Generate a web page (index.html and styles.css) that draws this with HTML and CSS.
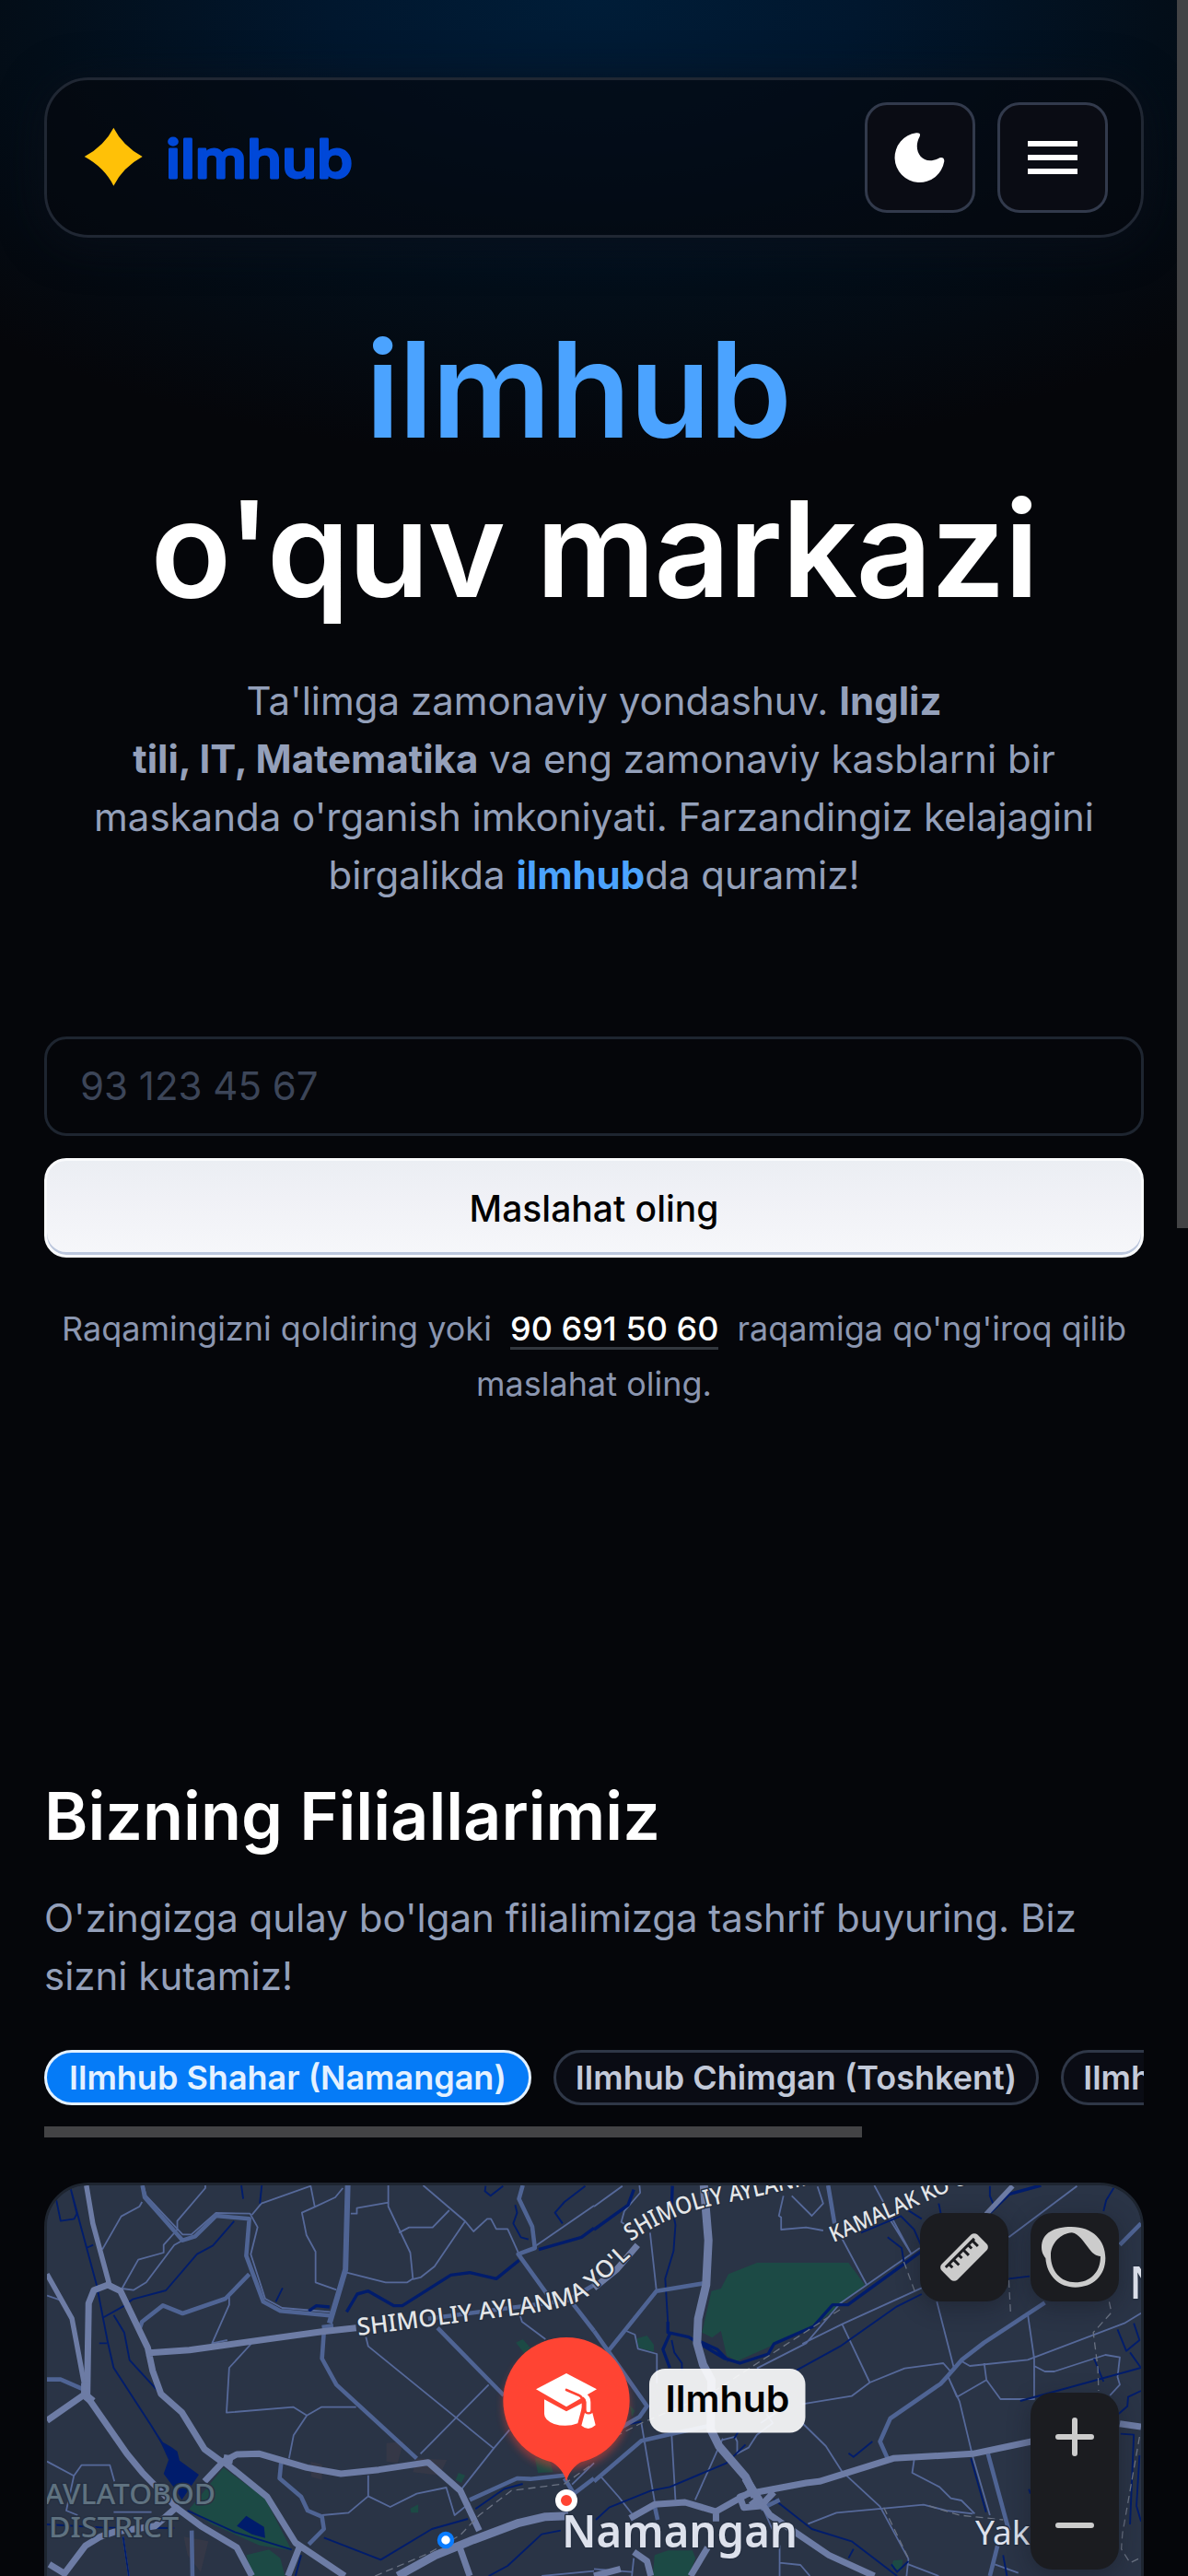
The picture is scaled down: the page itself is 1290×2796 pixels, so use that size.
FILE: index.html
```html
<!DOCTYPE html>
<html lang="uz">
<head>
<meta charset="utf-8">
<title>ilmhub</title>
<link rel="stylesheet" href="styles.css">
</head>
<body>
<div class="page">
  <header class="nav">
    <a class="logo">
      <svg width="310" height="80" viewBox="84 132 310 80">
        <path fill="#ffc107" transform="translate(70 110) scale(.33333)" d="M160 89Q190 148 254 183Q190 218 160 278Q130 218 65 183Q130 148 160 89Z"/>
        <text class="logo-text" x="180" y="193.500" textLength="203" lengthAdjust="spacingAndGlyphs">ilmhub</text>
      </svg>
    </a>
    <div class="nav-actions">
      <button class="icon-btn" aria-label="Mavzu">
        <svg width="114" height="114" viewBox="3 3 114 114"><path fill="#fff" d="M56 33.300Q61.500 32.800 59.500 37.500C51.500 52 62 69 79.500 61.200C83.500 58.800 87 60.500 86.200 64.500A27 27 0 1 1 56 33.300Z"/></svg>
      </button>
      <button class="icon-btn" aria-label="Menyu">
        <svg width="114" height="114" viewBox="3 3 114 114"><path fill="#fff" d="M33 42h54v6H33zM33 57h54v6H33zM33 72h54v6H33z"/></svg>
      </button>
    </div>
  </header>

  <main>
    <section class="hero">
      <h1><span class="brand">ilmhub</span><br>o'quv markazi</h1>
      <p class="lead">Ta'limga zamonaviy yondashuv. <b>Ingliz<br>tili, IT, Matematika</b> va eng zamonaviy kasblarni bir<br>maskanda o'rganish imkoniyati. Farzandingiz kelajagini<br>birgalikda <b class="accent">ilmhub</b>da quramiz!</p>
      <form class="lead-form">
        <input class="phone" type="text" placeholder="93 123 45 67">
        <button class="submit" type="button">Maslahat oling</button>
      </form>
      <p class="note">Raqamingizni qoldiring yoki <a class="tel">90 691 50 60</a> raqamiga qo'ng'iroq qilib<br>maslahat oling.</p>
    </section>

    <section class="branches">
      <h2>Bizning Filiallarimiz</h2>
      <p class="sub">O'zingizga qulay bo'lgan filialimizga tashrif buyuring. Biz<br>sizni kutamiz!</p>
      <div class="chips">
        <span class="chip active">Ilmhub Shahar (Namangan)</span>
        <span class="chip">Ilmhub Chimgan (Toshkent)</span>
        <span class="chip">Ilmhub Chust</span>
      </div>
      <div class="chips-track"></div>

      <div class="map">
        <svg class="map-canvas" width="1188" height="424" viewBox="51 32 1188 424">
          <defs>
            <path id="st1" d="M389 195L560 173Q622 166 642 149L690 104"/>
            <path id="st2" d="M685 93Q735 58 800 49L910 24"/>
            <path id="st3" d="M905 94L1100 8"/>
            <filter id="glow" x="-40%" y="-40%" width="180%" height="180%"><feGaussianBlur stdDeviation="12"/></filter>
          </defs>
          <rect x="51" y="32" width="1188" height="424" fill="#2a3446"/>
          <!-- west half -->
          <g transform="scale(.41135 .33333)">
            <g class="park">
              <path d="M590 1015L700 1115L770 1285L685 1268L560 1200L500 1150Z"/>
              <path d="M650 1300L710 1282L740 1310L752 1368H665Z"/>
              <path d="M1362 608L1380 597L1400 625L1385 645Z"/>
              <path d="M1412 985L1450 985L1460 1030L1420 1032Z"/>
              <path d="M1210 1032L1228 1040L1218 1065L1203 1055ZM1083 1148L1104 1135V1162H1085Z"/>
            </g>
            <g fill="#353847"><path d="M1020 935L1065 930L1050 1000L1020 995ZM485 1240L550 1255L530 1355L495 1300ZM1100 985L1180 990L1160 1040L1090 1030ZM820 995L850 1005V1055L822 1045Z"/></g>
            <g class="minor">
              <path d="M542 96V105L468 212V240L432 290V315L365 338L322 432L352 437L386 412L460 290L482 275M375 150L368 165L320 197L270 305"/>
              <path d="M665 192L690 155L820 98L831 166L797 185L809 258L833 312V412L888 436M831 166L885 135L905 105"/>
              <path d="M378 96L386 130L482 256H505L570 186L660 188L680 232L662 320L700 465L745 495L872 508"/>
              <path d="M926 188H942V170L1025 152V96M1025 152V165L1083 315L1090 400L1075 412H1018L915 380M1090 402L1110 396L1147 360L1228 213L1117 96M1053 250L1080 233H1142L1186 177M1228 213L1250 246L1286 205H1296L1310 238H1340L1370 320M1412 295L1568 162"/>
              <path d="M605 455V485L560 610L600 600M663 612L605 690L598 836L775 818L810 845L848 818H940M810 845L775 910L763 985"/>
              <path d="M966 590L972 620L1303 952M1110 970L1290 745M1215 1090L1305 950L1345 892M1373 520L1378 540L1440 597"/>
              <path d="M124 455L160 470M124 995L195 1042L215 1007H290L302 1060M195 1042L175 1155L205 1170M300 1160H400M325 1240L340 1368"/>
              <path d="M972 1040V1108L1030 1143L1100 1100L1178 1080L1200 1170L1240 1130M972 1108L920 1162L850 1170M1568 1000L1510 1070M1430 1368L1568 1352"/>
            </g>
            <g class="water">
              <path d="M148 140L160 212L196 205L203 188L186 104M186 104L255 420L285 610L300 690L400 880L440 960M270 528L325 490L350 467L438 438L520 320L562 292L618 213M300 518L328 575L342 665L420 770M228 300L246 290M262 610H282M637 96L642 140M691 96L686 155M746 430L728 475"/>
              <path class="wide" d="M815 505L835 488L870 492M915 508L943 450L972 440L1040 488H1062L1190 388L1240 380L1310 400L1370 340M1422 305L1535 265L1568 235"/>
              <path d="M1282 98L1280 115L1295 130L1328 98M1360 160L1365 185L1355 220L1375 265L1395 272M1485 220L1465 185L1490 150L1545 98M495 1155L620 1225L770 1282M855 1243L1005 1315L1140 1215L1235 1182M1255 1150L1330 1085L1380 1068M1290 1368L1340 1335L1430 1232L1480 1220M325 1240L340 1368M124 1200L270 1210L460 1212M795 1300L780 1368"/>
              <path class="lake" d="M400 880L430 932L452 948L468 962L474 992L525 1038L505 1075L480 1120L465 1090L432 1035L445 990L425 935Z"/>
              <path class="lake" d="M625 1205L650 1172L697 1208L700 1244L665 1232Z"/>
            </g>
            <g class="mid">
              <path d="M376 96L382 135L482 275L515 262L570 195L658 205L650 325L695 475L740 505L870 520M855 575L850 660L888 745L1100 985M368 565L375 540L430 487L482 513L595 465L658 385M1380 96L1370 140L1405 230L1412 300L1368 320L1450 460M1505 470L1568 570M1155 560L1330 780M124 728H160L220 760M742 1000L738 1050L795 1110L812 1155L850 1175L855 1215L815 1265M1240 1120L1365 1050L1400 1052L1490 1040M506 1220L508 1368M1490 1050L1515 1100L1568 1050M1130 530L1500 470L1568 420"/>
              <path class="thick" d="M918 96L912 370L870 545M850 560L880 555"/>
            </g>
            <g class="major">
              <path class="slim" d="M228 96L245 220L290 425M124 385L190 530L225 760"/>
              <path d="M230 785L234 480L248 437L285 420L318 440L390 625L403 700L425 775L480 835L540 955L590 1000M124 862L225 775L335 970L375 1030L470 1150L530 1205L625 1275L665 1368M385 642L500 632L850 572L940 560M540 1060L590 995L625 972L685 970L810 1015L900 1035L1000 1022L1130 998L1215 1090L1265 1220M590 995L705 1110L780 1260L910 1368M790 1275L760 1368M1215 1280L1240 1368M130 1330L170 1360L225 1270L265 1240L300 1225L410 1205L460 1150"/>
              <path class="wide" d="M1050 1368L1150 1300L1250 1250L1370 1195L1440 1175L1500 1172"/>
              <path class="wide" d="M225 740V780L245 800M590 985L615 990"/>
            </g>
            <path class="rail" d="M990 1368L1130 1295L1215 1235L1265 1170L1350 1090L1490 1068L1568 1000"/>
          </g>
          <!-- east half -->
          <g transform="translate(645 0) scale(.41135 .33333)">
            <g class="park">
              <path d="M430 348H672L715 420L590 545L480 612L378 668L350 650L335 570L312 592L285 575L310 440L335 432L355 385Z"/>
              <path d="M113 595L140 585L158 615V638L118 625ZM95 812L108 830L100 850Z"/>
              <path d="M160 1300L195 1285H260L268 1310L250 1368H155ZM790 1318L815 1315L812 1350L785 1342Z"/>
            </g>
            <g class="minor">
              <path d="M0 165L75 98M120 96L122 120L80 180L72 215L95 235M148 250L165 440M500 130L488 195L494 200V240L560 233L605 243M522 130L575 195L605 155L590 100M655 270L720 420M740 96L838 320M1275 98L1095 265M905 475L950 690M780 205L838 320M85 570L108 582L116 628L166 645V740"/>
              <path d="M550 612L655 548L865 430M430 692L560 610L650 480L860 300M655 548L728 738L820 692L922 675L940 700M728 738L680 782L550 808"/>
              <path d="M970 668L992 684L1145 664L1400 545L1444 512M1145 515L1162 660V792H1073L1036 730L1030 675M1036 730L958 785L935 720L965 800L1000 980L1045 1170M1162 684L1190 702H1215L1350 648L1388 656L1382 720L1388 745L1362 780"/>
              <path d="M550 870L612 945L655 1028L755 1142L830 1312L825 1368M565 1198L640 1162L870 1136L930 1155L1000 1165M845 990L840 1032L912 1078L942 1115L970 1122L1005 1165M830 1330L910 1368M1058 1330L1120 1358M338 925L372 915L378 930V970L408 950L430 908L472 870L455 840"/>
              <path d="M125 870L160 1125M205 910L215 1120M15 1040L65 1110L100 1165M267 1120L340 920M440 1130L490 1270V1368M490 1325L545 1332L570 1368M0 1345L100 1355M105 1310L100 1368M500 820L440 870"/>
            </g>
            <g class="water">
              <path class="wide" d="M0 240L90 160L105 110M207 98L205 160M195 540V575L250 590L345 660L385 675L460 645L475 612L580 555L630 485H670L865 310M200 580L182 630L200 690M1045 185L1095 125L1180 96M280 605L325 630L355 668"/>
              <path d="M205 160L215 225L210 310L188 400L195 540M205 600L212 640L232 675V700M535 698L650 620L800 490L865 450M865 205L820 170M910 155L915 185L900 230M705 250L810 196L845 240L870 310M775 265L812 300L818 345M1045 98V130L1055 160M1375 98L1352 145L1345 180M1095 400L1150 392M1425 545L1440 600L1405 635L1382 565M1415 640L1444 690L1125 798M1320 660L1345 735M1444 765L1410 785L1408 815L1385 840M672 968L685 980L735 930M0 905L50 885L125 865M5 1185L40 1145L150 1090L200 1078L350 1000L400 940M475 1118L575 1215L680 1255L800 1368M995 985L1035 1160M1148 1085L1152 1100M1080 1300L1090 1368M1390 905L1425 908L1415 1200M1440 975L1432 1140L1444 1190M685 1280L672 1310M785 1330L800 1355L830 1320M370 920L380 900"/>
            </g>
            <g class="mid">
              <path d="M38 635L165 440L290 415M0 570L140 815L120 850L0 935M0 1060L125 928L205 905L300 880M618 96L635 220M1388 290L1444 220M1190 478L1030 608L970 665L935 715L915 742L782 855L755 930L775 985M1040 970L1095 1220M1065 1270L1045 1368M160 1140L168 1185M490 1120L440 1150"/>
            </g>
            <g class="major">
              <path class="wide" d="M290 96L302 275L296 420L275 530L272 610L288 680L310 730L308 890L330 945L400 1045L425 1110"/>
              <path d="M430 1095L560 1065L595 1060L790 985L1000 970L1155 930M95 1180L160 1135L240 1128L322 1158L420 1090M322 1150V1190M405 1060L420 1095L385 1110L395 1145L440 1140L475 1095M430 1110L465 1170L620 1300L740 1368M70 1345L0 1368M300 1275L255 1368M105 1290L140 1320L150 1368M1388 872L1444 882M0 430L60 370L115 290"/>
              <path class="wide" d="M400 1050L435 1120L415 1140"/>
              <path class="slim" d="M1035 190L1105 98"/>
            </g>
            <path class="rail" d="M0 950L125 870L300 780L650 500M818 345L848 445M1095 405L1100 520M1360 475L1366 510L1318 575L1330 690L1332 765M1440 915L1395 1230L1392 1280L1415 1325L1440 1310M765 1145L830 1310M885 1140L965 1170L1080 1185"/>
          </g>
          <g class="streets">
            <text font-size="26"><textPath href="#st1" textLength="318" lengthAdjust="spacingAndGlyphs">SHIMOLIY AYLANMA YO'L</textPath></text>
            <text font-size="26"><textPath href="#st2" textLength="225" lengthAdjust="spacingAndGlyphs">SHIMOLIY AYLANMA</textPath></text>
            <text font-size="24"><textPath href="#st3" textLength="190" lengthAdjust="spacingAndGlyphs">KAMALAK KO'CHA</textPath></text>
          </g>
          <g class="district">
            <text x="234" y="378" text-anchor="end" textLength="208" lengthAdjust="spacingAndGlyphs">DAVLATOBOD</text>
            <text x="53" y="414" textLength="141" lengthAdjust="spacingAndGlyphs">DISTRICT</text>
          </g>
          <g class="places">
            <text x="610" y="425" font-size="49" font-weight="600" textLength="256" lengthAdjust="spacingAndGlyphs">Namangan</text>
            <text x="1059" y="422" font-size="37">Yaka</text>
            <text x="1226" y="155" font-size="49" font-weight="500">N</text>
          </g>
          <circle cx="484" cy="417" r="7" fill="#fff" stroke="#0a7cff" stroke-width="4.500"/>
          <g transform="translate(520 180) scale(.33333)">
            <circle cx="285" cy="275" r="205" fill="#ff4433" opacity=".45" filter="url(#glow)"/>
            <circle cx="285" cy="257" r="206" fill="#ff4433"/>
            <path fill="#ff4433" d="M205 440Q272 466 285 520Q298 466 365 440Z"/>
            <path fill="#fff" d="M213 253L285 292L340 263L322 331Q285 345 245 333Q213 320 213 300Z"/>
            <path fill="#fff" d="M186 220L285 168L384 220L285 277Z"/>
            <path class="strap" d="M285 222L325 239Q339 246 339 262V296"/>
            <path class="strap" d="M366 236Q372 262 369 290"/>
            <path class="cord" d="M346 241Q357 248 357 262V288"/>
            <path fill="#fff" d="M345 297Q357 306 370 297L380 337Q357 358 334 338Z"/>
            <circle cx="285" cy="582" r="27" fill="#ff4433" stroke="#fff" stroke-width="18"/>
          </g>
          <rect x="705" y="231" width="169.500" height="69.500" rx="17" fill="#fff" opacity=".9"/>
          <text class="pin-label" x="722.500" y="278" textLength="135" lengthAdjust="spacingAndGlyphs">Ilmhub</text>
        </svg>
        <div class="map-tools">
          <div class="tool-row">
            <div class="tool"><svg width="96" height="96" viewBox="0 0 96 96"><g transform="rotate(-45 48 48)"><rect x="20.500" y="36" width="55" height="24" rx="5" fill="#ccc"/><path d="M26 41.500H70M31 41V47M38 41V50M45.500 41V47M53 41V50M60.500 41V47M67 41V50" fill="none" stroke="#1b1c20" stroke-width="3"/></g></svg></div>
            <div class="tool"><svg width="96" height="96" viewBox="0 0 96 96"><path transform="scale(.33333) translate(-417 -96)" fill="#ccc" fill-rule="evenodd" d="M453 208C453 160 495 141 550 141C620 141 661 185 661 243C661 300 620 338 563 338C510 338 470 300 466 243C460 235 453 225 453 208ZM552 160C575 164 590 190 610 215C622 230 630 235 645 237C645 290 610 322 563 322C515 322 483 285 483 235C483 195 515 162 552 160Z"/></svg></div>
          </div>
          <div class="zoom"><svg width="96" height="192" viewBox="0 0 96 192"><path d="M30 48H66M48 30V66M30 144H66" fill="none" stroke="#ccc" stroke-width="6" stroke-linecap="round"/></svg></div>
        </div>
      </div>
    </section>
  </main>
  <div class="scroll-thumb"></div>
</div>
</body>
</html>
```
FILE: styles.css
```css
* { box-sizing: border-box; }
body {
  margin: 0;
  background: #05060a;
  font-family: Inter, "Liberation Sans", sans-serif;
  color: #fff;
}
.page {
  position: relative;
  height: 2796px;
  overflow: hidden;
  padding: 84px 48px 0;
  background: radial-gradient(ellipse 960px 500px at 50% 0, #001d38 0%, #01172e 30%, #030e19 64%, #05060a 100%) no-repeat #05060a;
}
h1, h2, p { margin: 0; }
button, input { font-family: inherit; }

.nav {
  display: flex;
  align-items: center;
  justify-content: space-between;
  height: 174px;
  padding: 0 36px 0 33px;
  border: 3px solid #202733;
  border-radius: 48px;
  background: rgba(4, 8, 14, .66);
  box-shadow: 0 6px 48px rgba(12, 16, 26, .7);
}
.logo { display: flex; }
.logo-text {
  font-size: 57px;
  font-weight: 500;
  fill: #0048d8;
  stroke: #0048d8;
  stroke-width: 2.8px;
  stroke-linejoin: round;
}
.nav-actions { display: flex; gap: 24px; }
.icon-btn {
  display: flex;
  width: 120px;
  height: 120px;
  padding: 0;
  border: 3px solid #323a4c;
  border-radius: 24px;
  background: #0a0c14;
}

.hero { text-align: center; padding-top: 79px; }
h1 {
  font-size: 144px;
  line-height: 172.8px;
  font-weight: 600;
  letter-spacing: -1.6px;
}
.brand { color: #4ba3ff; padding-right: 35px; }
.lead {
  margin-top: 46px;
  font-size: 42px;
  line-height: 63px;
  color: #94a0ba;
}
.lead b { font-weight: 700; }
.lead .accent { color: #4ba3ff; }
.lead-form {
  display: flex;
  flex-direction: column;
  gap: 24px;
  margin-top: 144px;
}
.phone {
  height: 108px;
  padding: 0 36px;
  border: 3px solid #1e2530;
  border-radius: 24px;
  background: transparent;
  font-size: 42px;
  color: #fff;
}
.phone::placeholder { color: #3c4558; opacity: 1; }
.submit {
  height: 108px;
  padding: 2px 0 0;
  border: 3px solid #f9fafc;
  border-radius: 24px;
  background: linear-gradient(#ebeef3, #f0f1f6 40%, #f6f7fa);
  box-shadow: inset 0 -3px 0 #bcc7dd;
  font-size: 39px;
  font-weight: 500;
  color: #000;
}
.note {
  margin-top: 47px;
  font-size: 36px;
  line-height: 60px;
  color: #8b96b0;
}
.tel {
  display: inline-block;
  margin: 0 10px;
  border-bottom: 3px solid #33383f;
  line-height: 39px;
  font-weight: 500;
  color: #fff;
}

.branches { padding-top: 395px; }
h2 { font-size: 72px; line-height: 87px; font-weight: 600; }
.sub {
  margin-top: 36px;
  font-size: 42px;
  line-height: 63px;
  color: #94a0ba;
}
.chips {
  display: flex;
  gap: 24px;
  margin-top: 49px;
  overflow: hidden;
}
.chip {
  flex: none;
  height: 60px;
  padding: 0 21px;
  border: 3px solid #2f3747;
  border-radius: 30px;
  background: #0a0c14;
  font-size: 36px;
  line-height: 54px;
  font-weight: 600;
  color: #c3cad9;
  white-space: nowrap;
}
.chip.active {
  padding: 0 24px;
  background: #057bf7;
  border-color: #e4f1ff;
  color: #e4f1ff;
}
.chips-track {
  width: 888px;
  height: 12px;
  margin-top: 23px;
  background: #434345;
}

.map {
  position: relative;
  height: 500px;
  margin-top: 49px;
  border: 3px solid #1e2530;
  border-radius: 48px;
  background: #2a3446;
  overflow: hidden;
}
.map-canvas { display: block; }
.park { fill: #1c4a45; }
.minor, .mid, .water, .major, .rail { fill: none; stroke-linejoin: round; }
.minor path, .mid path, .water path, .major path, .rail { vector-effect: non-scaling-stroke; }
.minor { stroke: #56699a; stroke-width: 1.8px; }
.mid { stroke: #4f6494; stroke-width: 4.6px; }
.mid .thick { stroke-width: 6px; }
.water { stroke: #001c6c; stroke-width: 1.9px; }
.water .wide { stroke-width: 3.4px; }
.water .lake { fill: #001c6c; stroke: none; }
.major { stroke: #6d7ca5; stroke-width: 7px; }
.major .slim { stroke-width: 5.5px; }
.major .wide { stroke-width: 9px; }
.rail { stroke: #6a7283; stroke-width: 1.3px; stroke-dasharray: 8 5; }
.strap { fill: none; stroke: #ff4433; stroke-width: 8px; stroke-linecap: round; }
.cord { fill: none; stroke: #fff; stroke-width: 14px; stroke-linecap: round; }
.streets text, .district text, .places text {
  font-family: "Noto Sans", sans-serif;
  stroke: #263042;
  stroke-width: 3px;
  paint-order: stroke;
  stroke-linejoin: round;
}
.streets text { fill: #e4e6e8; font-weight: 500; }
.district text { fill: #5f7280; font-size: 31px; font-weight: 500; }
.places text { fill: #dde1ec; }
.pin-label { font-size: 40px; font-weight: 600; fill: #000; }

.map-tools {
  position: absolute;
  top: 30px;
  right: 24px;
  display: flex;
  flex-direction: column;
  align-items: flex-end;
  gap: 99px;
}
.tool-row { display: flex; gap: 24px; }
.tool, .zoom {
  display: flex;
  border-radius: 24px;
  background: #1b1c20;
  box-shadow: 0 6px 24px rgba(20, 22, 32, .4);
}
.scroll-thumb {
  position: absolute;
  top: 0;
  right: 0;
  width: 12px;
  height: 1333px;
  background: #434345;
}
```
